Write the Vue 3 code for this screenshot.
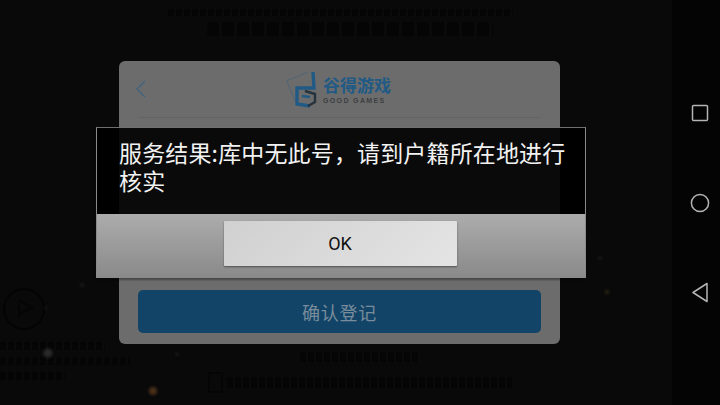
<script setup>
const sparks = [
  { x: 48, y: 353, s: 9, c: '#2a2a2a' },
  { x: 153, y: 391, s: 8, c: '#4a3018' },
  { x: 82, y: 285, s: 3, c: '#2c2c2c' },
  { x: 46, y: 308, s: 3, c: '#1e1e1e' },
  { x: 177, y: 354, s: 3, c: '#262626' },
  { x: 600, y: 258, s: 3, c: '#262626' },
  { x: 607, y: 292, s: 4, c: '#302c14' }
]
</script>

<template>
  <div class="screen">
    <main class="game">
      <div class="faint-top">
        <div class="faint-bar bar-a"></div>
        <div class="faint-bar bar-b"></div>
      </div>

      <section class="card">
        <header class="card-head">
          <svg class="back" width="12" height="20" viewBox="0 0 12 20">
            <path d="M10 2 L2 10 L10 18" fill="none" stroke="#3f6480" stroke-width="1.3" />
          </svg>
          <div class="logo">
            <svg width="36" height="40" viewBox="0 0 36 40">
              <path d="M23 3.3 L1.7 11.7 L10 31.7" fill="none" stroke="#4f6475" stroke-width="1" />
              <path d="M28 3 L29 19 L12 19 L12 35 L25 37" fill="none" stroke="#205a85" stroke-width="3.4" />
              <path d="M20 22 L30 25 L30 33 L23 37" fill="none" stroke="#27343e" stroke-width="2.4" />
              <path d="M17 27 L25 28" fill="none" stroke="#205a85" stroke-width="2.4" />
            </svg>
            <div class="logo-text">
              <span class="logo-cn">谷得游戏</span>
              <span class="logo-en">GOOD GAMES</span>
            </div>
          </div>
        </header>
        <div class="card-body"></div>
        <button class="confirm">确认登记</button>
      </section>

      <div class="faint-bottom">
        <div class="faint-bar bar-c"></div>
        <div class="check-row">
          <span class="check"></span>
          <div class="faint-bar bar-d"></div>
        </div>
      </div>

      <div class="faint-left">
        <svg class="play" width="44" height="44" viewBox="0 0 44 44">
          <circle cx="22" cy="22" r="20" fill="none" stroke="#040404" stroke-width="2" />
          <path d="M17 13 L17 31 M17 13 L30 21 L17 27" fill="none" stroke="#050505" stroke-width="2" />
        </svg>
        <div class="faint-bar bar-e"></div>
        <div class="faint-bar bar-f"></div>
        <div class="faint-bar bar-g"></div>
      </div>

      <span
        v-for="(p, i) in sparks"
        :key="i"
        class="spark"
        :style="{ left: p.x + 'px', top: p.y + 'px', width: p.s + 'px', height: p.s + 'px', background: p.c }"
      ></span>

      <div class="dialog">
        <div class="dialog-msg">服务结果:库中无此号&#xFF0C;请到户籍所在地进行核实</div>
        <div class="dialog-actions">
          <button class="ok">OK</button>
        </div>
      </div>
    </main>

    <nav class="navbar">
      <svg width="20" height="20" viewBox="0 0 20 20">
        <rect x="2.5" y="2.5" width="15" height="15" rx="1" fill="none" stroke="#b4b4b4" stroke-width="1.5" />
      </svg>
      <svg width="22" height="22" viewBox="0 0 22 22">
        <circle cx="11" cy="11" r="8.6" fill="none" stroke="#b4b4b4" stroke-width="1.5" />
      </svg>
      <svg class="tri" width="20" height="22" viewBox="0 0 20 22">
        <path d="M17 0.5 L3 9.5 L17 18.5 Z" fill="none" stroke="#b4b4b4" stroke-width="1.5" stroke-linejoin="round" />
      </svg>
    </nav>
  </div>
</template>

<style>
html, body { margin: 0; background: #000; }
</style>

<style scoped>
.screen {
  width: 720px;
  height: 405px;
  display: flex;
  overflow: hidden;
  background: #000;
  font-family: "Noto Sans CJK SC", "Liberation Sans", sans-serif;
}
.game {
  position: relative;
  width: 672px;
  height: 405px;
  background: #090909;
}
.navbar {
  width: 48px;
  box-sizing: border-box;
  padding: 103px 0 0 8px;
  display: flex;
  flex-direction: column;
  align-items: center;
  gap: 69px;
  background: #040404;
}
.tri { overflow: visible; }
.faint-top {
  height: 61px;
  box-sizing: border-box;
  padding-top: 9px;
  display: flex;
  flex-direction: column;
  align-items: center;
  gap: 6px;
}
.faint-bar {
  background: repeating-linear-gradient(90deg, #050505 0 6px, #0a0a0a 6px 8px);
}
.bar-a { width: 345px; height: 7px; margin-left: 9px; }
.bar-b {
  width: 286px;
  height: 14px;
  margin-left: 28px;
  background: repeating-linear-gradient(90deg, #050505 0 12px, #0a0a0a 12px 15px);
}
.card {
  width: 441px;
  height: 283px;
  margin-left: 119px;
  box-sizing: border-box;
  padding: 0 19px 11px;
  display: flex;
  flex-direction: column;
  border-radius: 6px;
  background: #6c6c6c;
}
.card-head {
  height: 56px;
  flex: none;
  display: flex;
  align-items: center;
  justify-content: center;
  position: relative;
  border-bottom: 1px solid #646464;
}
.back {
  position: absolute;
  left: -3px;
  top: 18px;
}
.logo {
  display: flex;
  align-items: center;
  gap: 2px;
  margin-left: -3px;
}
.logo-text {
  display: flex;
  flex-direction: column;
}
.logo-cn {
  font-size: 17px;
  line-height: 24px;
  font-weight: 700;
  color: #205a85;
}
.logo-en {
  font-family: "Liberation Sans", sans-serif;
  font-size: 7px;
  line-height: 8px;
  font-weight: 700;
  color: #3c3f42;
  letter-spacing: 1.35px;
  white-space: nowrap;
}
.card-body { flex: 1; }
.confirm {
  height: 43px;
  flex: none;
  border: 0;
  border-radius: 5px;
  background: #124468;
  color: #788c9b;
  font-family: inherit;
  font-size: 18px;
  letter-spacing: 0.8px;
}
.faint-bottom {
  display: flex;
  flex-direction: column;
  align-items: center;
  padding-top: 8px;
  gap: 10px;
}
.bar-c { width: 120px; height: 10px; margin-left: 48px; }
.check-row {
  display: flex;
  align-items: center;
  gap: 4px;
  margin-left: 48px;
}
.check {
  width: 15px;
  height: 21px;
  border: 2px solid #050505;
  box-sizing: border-box;
}
.bar-d { width: 285px; height: 11px; }
.faint-left {
  position: absolute;
  left: 0;
  top: 287px;
  display: flex;
  flex-direction: column;
  gap: 7px;
}
.play { margin-left: 2px; margin-bottom: 4px; }
.bar-e { width: 105px; height: 8px; }
.bar-f { width: 130px; height: 8px; }
.bar-g { width: 65px; height: 8px; }
.spark {
  position: absolute;
  border-radius: 50%;
  transform: translate(-50%, -50%);
  filter: blur(1.5px);
}
.dialog {
  position: absolute;
  left: 96px;
  top: 127px;
  width: 490px;
  height: 151px;
  box-sizing: border-box;
  display: flex;
  flex-direction: column;
  border: 1px solid #8a8a8a;
  border-top-color: #6f6f6f;
  box-shadow: 0 2px 2px rgba(0, 0, 0, 0.35);
}
.dialog-msg {
  height: 86px;
  flex: none;
  box-sizing: border-box;
  padding: 10px 10px 0 22px;
  background: rgba(0, 0, 0, 0.9);
  color: #f2f2f2;
  font-size: 23px;
  line-height: 28px;
  letter-spacing: 0.15px;
}
.dialog-actions {
  flex: 1;
  display: flex;
  justify-content: center;
  padding: 7px 2px 0 0;
  background: linear-gradient(#acacac, #8a8a8a);
}
.ok {
  width: 233px;
  height: 45px;
  border: 0;
  border-radius: 1px;
  background: linear-gradient(135deg, #d0d0d0, #e4e4e4);
  box-shadow: 0 1px 2px rgba(0, 0, 0, 0.45);
  color: #111;
  font-family: "Roboto", sans-serif;
  font-size: 18px;
}
</style>
